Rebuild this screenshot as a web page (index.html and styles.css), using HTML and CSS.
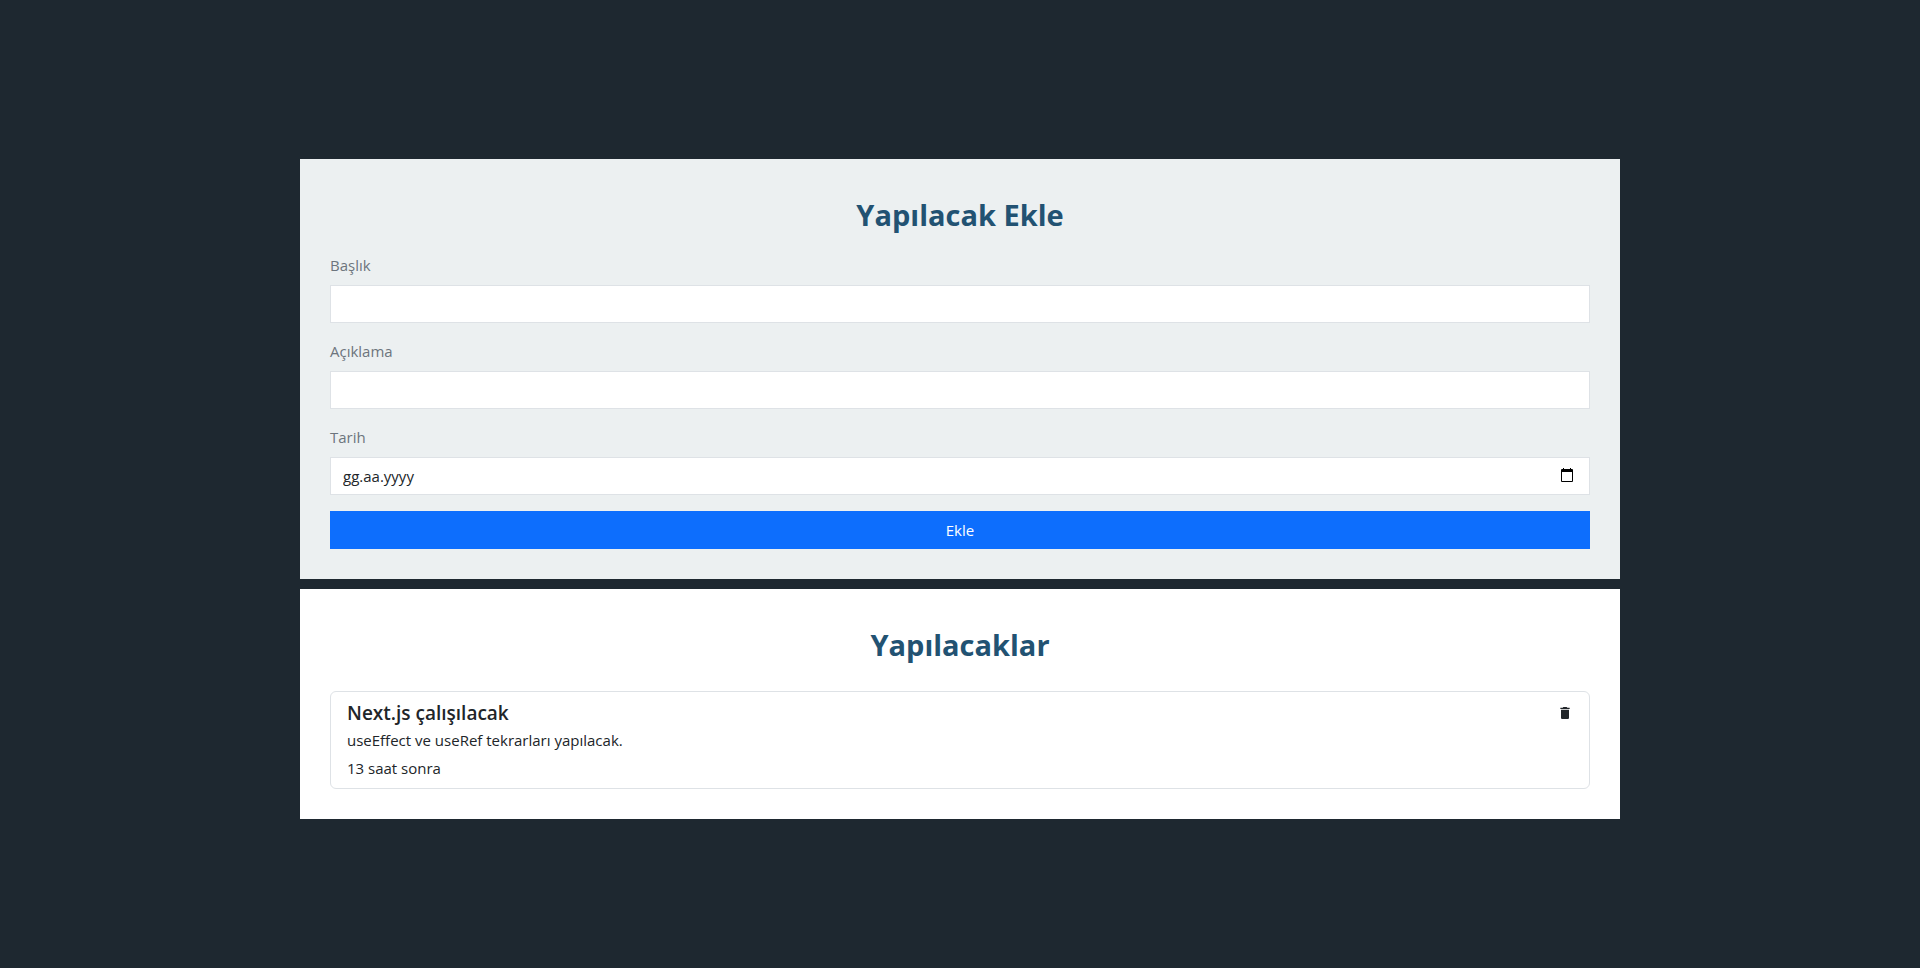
FILE: index.html
```html
<!DOCTYPE html>
<html lang="tr">
<head>
<meta charset="utf-8">
<meta name="viewport" content="width=device-width, initial-scale=1">
<title>Yapılacaklar</title>
<link rel="stylesheet" href="styles.css">
</head>
<body class="page">
<main class="container">
  <section class="panel panel-form">
    <h1 class="panel-title">Yapılacak Ekle</h1>
    <form class="form">
      <div class="field">
        <label class="label" for="title">Başlık</label>
        <input class="input" id="title" type="text">
      </div>
      <div class="field">
        <label class="label" for="description">Açıklama</label>
        <input class="input" id="description" type="text">
      </div>
      <div class="field">
        <label class="label" for="date">Tarih</label>
        <div class="input date-box">
          <input class="date-input" id="date" type="text" placeholder="gg.aa.yyyy">
          <button class="icon-button" type="button" aria-label="Tarih seç">
            <svg class="icon" viewBox="0 0 16 16" aria-hidden="true"><path fill-rule="evenodd" d="M4 0h1v1h6V0h1v1h1q1 0 1 1v11q0 1-1 1H3q-1 0-1-1V2q0-1 1-1h1zM3 4v9h10V4z"/></svg>
          </button>
        </div>
      </div>
      <button class="submit" type="submit">Ekle</button>
    </form>
  </section>
  <section class="panel panel-list">
    <h2 class="panel-title">Yapılacaklar</h2>
    <ul class="todos">
      <li class="todo">
        <div class="todo-head">
          <h3 class="todo-title">Next.js çalışılacak</h3>
          <button class="icon-button trash" type="button" aria-label="Sil">
            <svg class="icon" viewBox="0 0 24 24" aria-hidden="true"><path d="M6 19c0 1.1.9 2 2 2h8c1.1 0 2-.9 2-2V7H6v12zM19 4h-3.5l-1-1h-5l-1 1H5v2h14V4z"/></svg>
          </button>
        </div>
        <div class="todo-body">
          <p class="todo-text">useEffect ve useRef tekrarları yapılacak.</p>
          <p class="todo-text">13 saat sonra</p>
        </div>
      </li>
    </ul>
  </section>
</main>
</body>
</html>
```
FILE: styles.css
```css
* { box-sizing: border-box; }
.page {
  margin: 0;
  min-height: 100vh;
  display: flex;
  align-items: center;
  justify-content: center;
  background: #1e2830;
  color: #212529;
  font-family: "Segoe UI", "Open Sans", "Noto Sans", sans-serif;
  font-size: 15px;
  line-height: 24px;
}
.container { width: 100%; max-width: 1320px; }
.panel { margin-top: 10px; padding: 30px; background: #fff; }
.panel-form { background: #ecf0f1; }
.panel-title {
  margin: 0 0 12px;
  color: #225272;
  font-size: 29px;
  font-weight: 700;
  line-height: 52px;
  text-align: center;
}
.panel-list .panel-title { margin-bottom: 20px; }
.form { display: flex; flex-direction: column; gap: 16px; }
.field { display: flex; flex-direction: column; gap: 8px; }
.label { color: #6c757d; }
.input {
  width: 100%;
  height: 38px;
  padding: 6px 12px;
  border: 1px solid #dee2e6;
  border-radius: 0;
  background: #fff;
  color: inherit;
  font: inherit;
}
.date-box { display: flex; align-items: center; padding-right: 14px; }
.date-input {
  flex: 1;
  min-width: 0;
  padding: 0;
  border: 0;
  background: transparent;
  color: inherit;
  font: inherit;
}
.date-input::placeholder { color: #212529; opacity: 1; }
.icon-button {
  display: flex;
  padding: 0;
  border: 0;
  background: none;
  color: #000;
  cursor: pointer;
}
.trash { color: #212529; }
.icon { width: 16px; height: 16px; fill: currentColor; }
.submit {
  height: 38px;
  border: 0;
  background: #0d6efd;
  color: #fff;
  font: inherit;
  cursor: pointer;
}
.todos { margin: 0; padding: 0; list-style: none; }
.todo {
  display: flex;
  flex-direction: column;
  gap: 2px;
  padding: 8px 16px;
  border: 1px solid #dee2e6;
  border-radius: 6px;
}
.todo-head { display: flex; align-items: center; justify-content: space-between; }
.todo-title { margin: 0; font-size: 19px; font-weight: 600; line-height: 26px; }
.todo-body { display: flex; flex-direction: column; gap: 4px; }
.todo-text { margin: 0; }
```
